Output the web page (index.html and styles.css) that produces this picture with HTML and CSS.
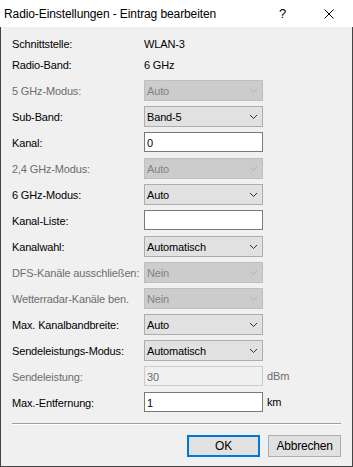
FILE: index.html
```html
<!DOCTYPE html>
<html lang="de">
<head>
    <meta charset="UTF-8">
    <meta name="viewport" content="width=device-width, initial-scale=1.0">
    <title>Radio-Einstellungen - Eintrag bearbeiten</title>
    <link rel="stylesheet" href="styles.css">
</head>
<body>
    <div class="window">
        <div class="titlebar">
            <span class="title">Radio-Einstellungen - Eintrag bearbeiten</span>
            <span class="help">?</span>
            <span class="close">
                <svg width="10" height="10" viewBox="0 0 10 10"><path d="M0.5 0.5 L9.5 9.5 M9.5 0.5 L0.5 9.5" stroke="#000" stroke-width="1" fill="none"/></svg>
            </span>
        </div>

        <div class="content">
            <div class="info">
                <span>Schnittstelle:</span><span>WLAN-3</span>
                <span>Radio-Band:</span><span>6 GHz</span>
            </div>

            <div class="form">
                <label class="disabled">5 GHz-Modus:</label>
                <div class="combo disabled"><span>Auto</span><svg width="7" height="4" viewBox="0 0 7 4"><path d="M0 0 L3.5 3.5 L7 0" /></svg></div>
                <span></span>

                <label>Sub-Band:</label>
                <div class="combo"><span>Band-5</span><svg width="7" height="4" viewBox="0 0 7 4"><path d="M0 0 L3.5 3.5 L7 0" /></svg></div>
                <span></span>

                <label>Kanal:</label>
                <input class="field" type="text" value="0">
                <span></span>

                <label class="disabled">2,4 GHz-Modus:</label>
                <div class="combo disabled"><span>Auto</span><svg width="7" height="4" viewBox="0 0 7 4"><path d="M0 0 L3.5 3.5 L7 0" /></svg></div>
                <span></span>

                <label>6 GHz-Modus:</label>
                <div class="combo"><span>Auto</span><svg width="7" height="4" viewBox="0 0 7 4"><path d="M0 0 L3.5 3.5 L7 0" /></svg></div>
                <span></span>

                <label>Kanal-Liste:</label>
                <input class="field" type="text" value="">
                <span></span>

                <label>Kanalwahl:</label>
                <div class="combo"><span>Automatisch</span><svg width="7" height="4" viewBox="0 0 7 4"><path d="M0 0 L3.5 3.5 L7 0" /></svg></div>
                <span></span>

                <label class="disabled">DFS-Kanäle ausschließen:</label>
                <div class="combo disabled"><span>Nein</span><svg width="7" height="4" viewBox="0 0 7 4"><path d="M0 0 L3.5 3.5 L7 0" /></svg></div>
                <span></span>

                <label class="disabled">Wetterradar-Kanäle ben.</label>
                <div class="combo disabled"><span>Nein</span><svg width="7" height="4" viewBox="0 0 7 4"><path d="M0 0 L3.5 3.5 L7 0" /></svg></div>
                <span></span>

                <label>Max. Kanalbandbreite:</label>
                <div class="combo"><span>Auto</span><svg width="7" height="4" viewBox="0 0 7 4"><path d="M0 0 L3.5 3.5 L7 0" /></svg></div>
                <span></span>

                <label>Sendeleistungs-Modus:</label>
                <div class="combo"><span>Automatisch</span><svg width="7" height="4" viewBox="0 0 7 4"><path d="M0 0 L3.5 3.5 L7 0" /></svg></div>
                <span></span>

                <label class="disabled">Sendeleistung:</label>
                <input class="field" type="text" value="30" disabled>
                <span class="unit disabled">dBm</span>

                <label>Max.-Entfernung:</label>
                <input class="field" type="text" value="1">
                <span class="unit">km</span>
            </div>

            <div class="separator"></div>

            <div class="buttons">
                <button class="btn default">OK</button>
                <button class="btn">Abbrechen</button>
            </div>
        </div>
    </div>
</body>
</html>
```

FILE: styles.css
```css
* {
    margin: 0;
    padding: 0;
    box-sizing: border-box;
}

body {
    font-family: 'Liberation Sans', Arial, sans-serif;
    font-size: 11px;
    letter-spacing: -0.15px;
    color: #000;
    background: #f0f0f0;
}

.window {
    width: 353px;
    height: 467px;
    display: flex;
    flex-direction: column;
}

.titlebar {
    height: 27px;
    background: white;
    display: flex;
    align-items: center;
    padding-left: 4px;
    font-size: 12px;
    letter-spacing: -0.1px;
}

.title {
    flex: 1;
}

.help {
    width: 8px;
    margin-right: 37px;
    font-size: 13px;
}

.close {
    width: 10px;
    height: 10px;
    margin-right: 19px;
    display: flex;
}

.content {
    flex: 1;
    border: 1px solid #444;
    border-top: none;
    padding: 6px 11px 0 11px;
    display: flex;
    flex-direction: column;
}

.info {
    display: grid;
    grid-template-columns: 132px auto;
    grid-auto-rows: 21px;
    align-items: center;
    margin-bottom: 5px;
}

.form {
    display: grid;
    grid-template-columns: 132px 119px auto;
    grid-auto-rows: 21px;
    row-gap: 5px;
    align-items: center;
}

.form label {
    white-space: nowrap;
}

.disabled {
    color: #6d6d6d;
}

.combo {
    height: 21px;
    background: #e1e1e1;
    border: 1px solid #adadad;
    display: flex;
    align-items: center;
    justify-content: space-between;
    padding: 1px 5px 0 2px;
}

.combo svg path {
    fill: none;
    stroke: #333;
    stroke-width: 1;
}

.combo.disabled {
    background: #cccccc;
    border-color: #bfbfbf;
    color: #838383;
}

.combo.disabled svg path {
    stroke: #b0b0b0;
}

.field {
    align-self: start;
    width: 119px;
    height: 20px;
    border: 1px solid #7a7a7a;
    background: white;
    padding: 1px 2px 0 2px;
    font-family: inherit;
    font-size: 11px;
    letter-spacing: -0.15px;
    color: #000;
    outline: none;
}

.field:disabled {
    background: #f0f0f0;
    border-color: #cccccc;
    color: #6d6d6d;
}

.unit {
    padding-left: 4px;
    align-self: start;
    line-height: 20px;
}

.separator {
    margin-top: 10px;
    height: 2px;
    border-top: 1px solid #a0a0a0;
    border-bottom: 1px solid white;
}

.buttons {
    margin-top: 10px;
    display: flex;
    justify-content: flex-end;
    gap: 8px;
}

.btn {
    width: 73px;
    height: 22px;
    background: #e1e1e1;
    border: 1px solid #adadad;
    font-family: inherit;
    font-size: 12px;
    letter-spacing: -0.2px;
    color: #000;
}

.btn.default {
    border: 2px solid #0078d7;
}
```
